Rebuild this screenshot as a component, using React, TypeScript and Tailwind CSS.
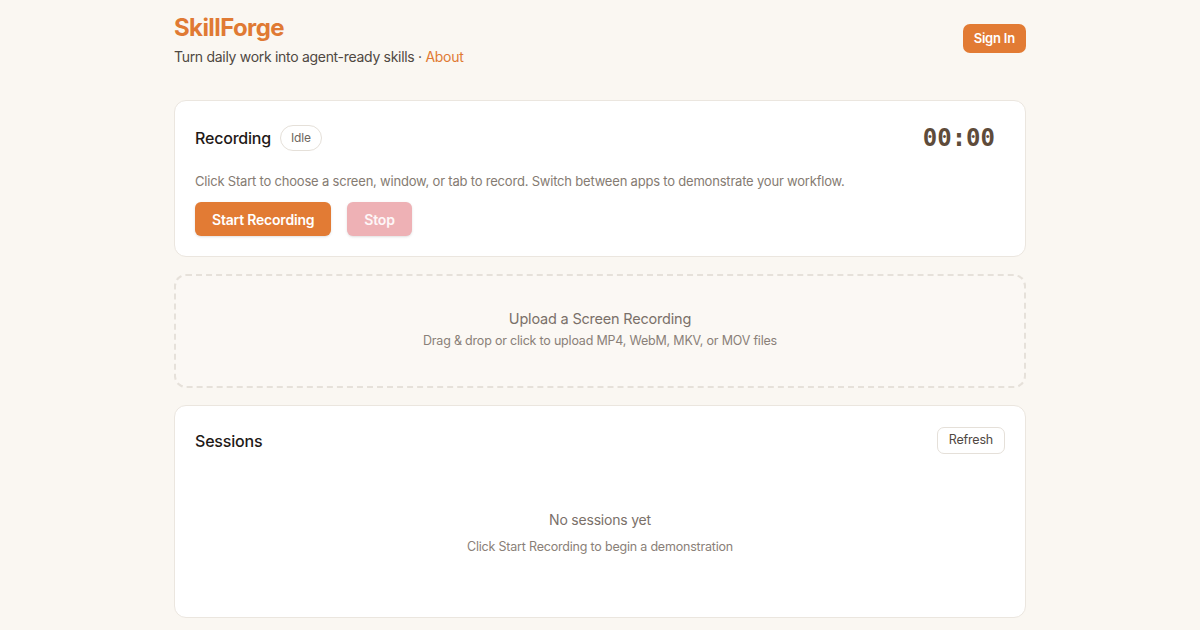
export default function App() {
  return (
    <div className="min-h-[630px] bg-[#faf7f2] font-['Inter','Liberation_Sans',sans-serif] tracking-[-0.2px] text-[#1f1a17]">
      <div className="mx-auto w-[852px] pt-[14px]">
        <header className="flex items-start justify-between">
          <div>
            <h1 className="text-[24px] font-bold leading-[28px] tracking-[-0.6px] text-[#e07a34]">SkillForge</h1>
            <p className="mt-[7px] text-[14px] leading-[16px] tracking-[-0.3px] text-[#4f4842]">
              Turn daily work into agent-ready skills ·{' '}
              <a className="text-[#e07a34]" href="#">
                About
              </a>
            </p>
          </div>
          <button className="mt-[10px] h-[29px] rounded-[7px] bg-[#e27b34] px-[11px] text-[13px] font-semibold text-white">
            Sign In
          </button>
        </header>

        <section className="mt-[35px] rounded-[12px] border border-[#ebe6df] bg-white px-[20px] pb-[20px] pt-[19px]">
          <div className="flex items-center justify-between">
            <div className="flex items-center gap-[9px]">
              <h2 className="text-[16px] font-medium">Recording</h2>
              <span className="rounded-full border border-[#e5e0d9] px-[10px] py-[5px] text-[12px] leading-[14px] text-[#6e655d]">
                Idle
              </span>
            </div>
            <div className="pr-[10px] font-['DejaVu_Sans_Mono','Liberation_Mono',monospace] text-[24px] font-bold tracking-normal text-[#5e4b3a]">
              00:00
            </div>
          </div>
          <p className="mt-[16px] text-[13px] leading-[18px] text-[#857b72]">
            Click Start to choose a screen, window, or tab to record. Switch between apps to demonstrate your workflow.
          </p>
          <div className="mt-[12px] flex gap-[16px]">
            <button className="h-[34px] rounded-[6px] bg-[#e27b34] px-[17px] text-[14px] font-semibold text-white shadow-sm">
              Start Recording
            </button>
            <button className="h-[34px] rounded-[6px] bg-[#eeb1b5] px-[17px] text-[14px] font-semibold text-white/90 shadow-sm">
              Stop
            </button>
          </div>
        </section>

        <section className="mt-[17px] flex h-[114px] flex-col items-center justify-center rounded-[12px] border-2 border-dashed border-[#e6e1da] bg-[#fbf8f4] pb-[4px]">
          <p className="text-[14.5px] leading-[18px] text-[#7a7069]">Upload a Screen Recording</p>
          <p className="mt-[5px] text-[12.5px] leading-[16px] text-[#8a8078]">
            Drag &amp; drop or click to upload MP4, WebM, MKV, or MOV files
          </p>
        </section>

        <section className="mt-[17px] h-[213px] rounded-[12px] border border-[#ebe6df] bg-white px-[20px] pt-[21px]">
          <div className="flex items-center justify-between">
            <h2 className="text-[16px] font-medium">Sessions</h2>
            <button className="h-[27px] rounded-[7px] border border-[#e5e0d9] bg-white px-[11px] text-[12.5px] text-[#4f4842]">
              Refresh
            </button>
          </div>
          <div className="mt-[57px] text-center">
            <p className="text-[14px] leading-[18px] text-[#7a7069]">No sessions yet</p>
            <p className="mt-[10px] text-[12.5px] leading-[16px] text-[#8a8078]">
              Click Start Recording to begin a demonstration
            </p>
          </div>
        </section>
      </div>
    </div>
  )
}
